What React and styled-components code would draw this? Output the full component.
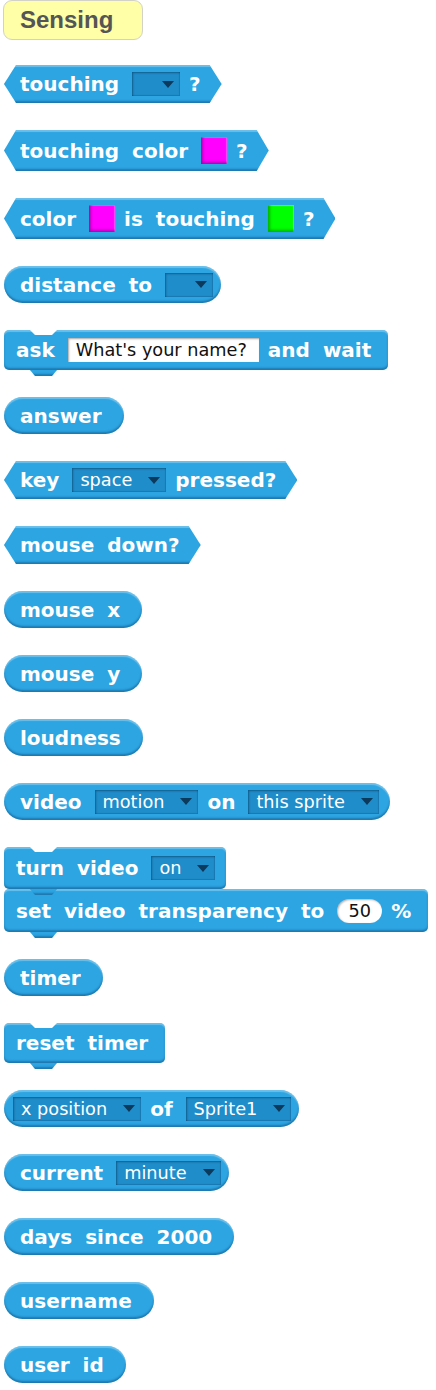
import React from 'react';
import styled, { createGlobalStyle, css } from 'styled-components';

const GlobalStyle = createGlobalStyle`
  body {
    margin: 0;
    background: #ffffff;
  }
`;

const Palette = styled.div`
  display: flex;
  flex-direction: column;
  align-items: flex-start;
  gap: 27px;
  padding: 0 0 20px 4px;
`;

const Header = styled.div`
  display: flex;
  align-items: center;
  box-sizing: border-box;
  width: 140px;
  height: 40px;
  margin: 0 0 -2px -1px;
  padding-left: 16px;
  border: 1.5px solid #d2d2c8;
  border-radius: 9px;
  background: #ffffa8;
  color: #555555;
  font-family: "Liberation Sans", Arial, sans-serif;
  font-weight: bold;
  font-size: 24px;
`;

const blockBase = css`
  display: inline-flex;
  align-items: center;
  gap: 13px;
  box-sizing: border-box;
  background: #2ca5e2;
  color: #ffffff;
  font-family: "DejaVu Sans", Verdana, sans-serif;
  font-weight: bold;
  font-size: 20px;
  white-space: nowrap;
  box-shadow: inset 0 2px 1px rgba(255, 255, 255, 0.3),
    inset 0 -2px 2px rgba(0, 40, 80, 0.35);
`;

const Reporter = styled.div`
  ${blockBase}
  height: 37px;
  border-radius: 19px;
  padding: 0 ${(p) => p.$pr ?? 22}px 0 ${(p) => p.$pl ?? 16}px;
`;

const Boolean = styled.div`
  ${blockBase}
  height: ${(p) => (p.$tall ? 41 : 38)}px;
  padding: 0 21px 0 16px;
  clip-path: polygon(0 50%, 12px 0, calc(100% - 12px) 0, 100% 50%, calc(100% - 12px) 100%, 12px 100%);
`;

const Command = styled.div`
  ${blockBase}
  position: relative;
  z-index: ${(p) => (p.$top ? 2 : 1)};
  height: ${(p) => p.$h ?? 40}px;
  padding: 0 ${(p) => p.$pr ?? 17}px 0 12px;
  border-radius: 5px;

  &::before {
    content: '';
    display: ${(p) => (p.$joined ? 'none' : 'block')};
    position: absolute;
    top: 0;
    left: 26px;
    width: 27px;
    height: 5px;
    background: #ffffff;
    clip-path: polygon(0 0, 100% 0, calc(100% - 5px) 100%, 5px 100%);
  }

  &::after {
    content: '';
    position: absolute;
    top: 100%;
    left: 26px;
    width: 27px;
    height: 6px;
    background: #2ca5e2;
    box-shadow: inset 0 -2px 2px rgba(0, 40, 80, 0.35);
    clip-path: polygon(0 0, 100% 0, calc(100% - 5px) 100%, 5px 100%);
  }
`;

const Stack = styled.div`
  display: flex;
  flex-direction: column;
  align-items: flex-start;
`;

const Label = styled.span`
  line-height: 1;
`;

const Dropdown = styled.span`
  display: inline-flex;
  align-items: center;
  justify-content: ${(p) => (p.$empty ? 'flex-end' : 'space-between')};
  gap: 16px;
  box-sizing: border-box;
  width: ${(p) => (p.$empty ? '48px' : 'auto')};
  height: 24px;
  margin-right: -4px;
  padding: 0 6px 0 8px;
  background: #1f8dca;
  box-shadow: inset 1px 1px 2px rgba(0, 30, 60, 0.45), inset -1px -1px 1px rgba(0, 30, 60, 0.15);
  color: #ffffff;
  font-family: "DejaVu Sans", Verdana, sans-serif;
  font-weight: normal;
  font-size: 17.7px;
`;

const Arrow = styled.span`
  width: 0;
  height: 0;
  border-left: 6px solid transparent;
  border-right: 6px solid transparent;
  border-top: 7px solid #0b3a5c;
`;

const TextInput = styled.span`
  display: inline-flex;
  align-items: center;
  height: 24px;
  margin-right: -4px;
  padding: 0 12px 0 8px;
  background: #ffffff;
  box-shadow: inset 1px 1px 2px rgba(0, 0, 0, 0.35);
  color: #111111;
  font-family: "DejaVu Sans", Verdana, sans-serif;
  font-weight: normal;
  font-size: 17.7px;
`;

const NumberInput = styled.span`
  display: inline-flex;
  align-items: center;
  justify-content: center;
  width: 45px;
  height: 24px;
  margin-right: -4px;
  border-radius: 12px;
  background: #ffffff;
  box-shadow: inset 1px 1px 2px rgba(0, 0, 0, 0.3);
  color: #111111;
  font-family: "DejaVu Sans", Verdana, sans-serif;
  font-weight: normal;
  font-size: 17.7px;
`;

const Swatch = styled.span`
  width: 26px;
  height: 27px;
  margin-right: -4px;
  background: ${(p) => p.$color};
  box-shadow: inset 2px -2px 3px rgba(0, 0, 0, 0.3), inset -1px 1px 1px rgba(255, 255, 255, 0.3);
`;

const words = (str) => str.split(' ').map((w, i) => <Label key={w + i}>{w}</Label>);

const Menu = ({ value }) => (
  <Dropdown $empty={!value}>
    {value && <span>{value}</span>}
    <Arrow />
  </Dropdown>
);

export default function App() {
  return (
    <>
      <GlobalStyle />
      <Palette>
        <Header>Sensing</Header>

        <Boolean>
          {words('touching')}
          <Menu />
          <Label>?</Label>
        </Boolean>

        <Boolean $tall>
          {words('touching color')}
          <Swatch $color="#ff00ff" />
          <Label>?</Label>
        </Boolean>

        <Boolean $tall>
          <Label>color</Label>
          <Swatch $color="#ff00ff" />
          {words('is touching')}
          <Swatch $color="#00ff00" />
          <Label>?</Label>
        </Boolean>

        <Reporter $pr={12}>
          {words('distance to')}
          <Menu />
        </Reporter>

        <Command>
          <Label>ask</Label>
          <TextInput>What's your name?</TextInput>
          {words('and wait')}
        </Command>

        <Reporter>{words('answer')}</Reporter>

        <Boolean>
          <Label>key</Label>
          <Menu value="space" />
          <Label>pressed?</Label>
        </Boolean>

        <Boolean>{words('mouse down?')}</Boolean>

        <Reporter>{words('mouse x')}</Reporter>
        <Reporter>{words('mouse y')}</Reporter>
        <Reporter>{words('loudness')}</Reporter>

        <Reporter $pr={15}>
          <Label>video</Label>
          <Menu value="motion" />
          <Label>on</Label>
          <Menu value="this sprite" />
        </Reporter>

        <Stack>
          <Command $top $h={42} $pr={15}>
            {words('turn video')}
            <Menu value="on" />
          </Command>
          <Command $joined $h={43}>
            {words('set video transparency to')}
            <NumberInput>50</NumberInput>
            <Label>%</Label>
          </Command>
        </Stack>

        <Reporter>{words('timer')}</Reporter>

        <Command>{words('reset timer')}</Command>

        <Reporter $pl={9} $pr={12}>
          <Menu value="x position" />
          <Label>of</Label>
          <Menu value="Sprite1" />
        </Reporter>

        <Reporter $pr={12}>
          <Label>current</Label>
          <Menu value="minute" />
        </Reporter>

        <Reporter>{words('days since 2000')}</Reporter>
        <Reporter>{words('username')}</Reporter>
        <Reporter>{words('user id')}</Reporter>
      </Palette>
    </>
  );
}
